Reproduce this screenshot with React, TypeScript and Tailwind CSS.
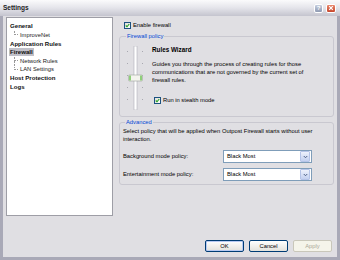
import type { ReactNode } from 'react'

type TreeItem = {
  label: string
  bold?: boolean
  child?: boolean
  last?: boolean
  selected?: boolean
}

const treeItems: TreeItem[] = [
  { label: 'General', bold: true },
  { label: 'ImproveNet', child: true, last: true },
  { label: 'Application Rules', bold: true },
  { label: 'Firewall', bold: true, selected: true },
  { label: 'Network Rules', child: true },
  { label: 'LAN Settings', child: true, last: true },
  { label: 'Host Protection', bold: true },
  { label: 'Logs', bold: true },
]

const font = { fontFamily: '"Liberation Sans", Arial, sans-serif' }

function CheckBox() {
  return (
    <span className="flex h-[7px] w-[7px] shrink-0 items-center justify-center border border-[#1c5180] bg-gradient-to-br from-[#dcdcd6] to-white">
      <svg width="5" height="5" viewBox="0 0 10 10">
        <path d="M1.5 5 L4 7.5 L8.5 2" fill="none" stroke="#21a121" strokeWidth="2.2" />
      </svg>
    </span>
  )
}

function Group({ title, className, children }: { title: string; className: string; children: ReactNode }) {
  return (
    <fieldset className={`rounded-[3px] border border-[#c9c8d0] ${className}`}>
      <legend className="ml-[2px] px-[1px] text-[5.8px] leading-[7px] text-[#0046d5]">{title}</legend>
      {children}
    </fieldset>
  )
}

function Select({ value }: { value: string }) {
  return (
    <div className="flex h-[13px] w-[89px] items-center justify-between border border-[#7f9db9] bg-white">
      <span className="pl-[3px] text-[5.8px] leading-[7px] text-black">{value}</span>
      <span className="mr-[1px] flex h-[11px] w-[10px] items-center justify-center rounded-[1px] border border-[#b5c4e8] bg-gradient-to-b from-[#eef2fc] to-[#c3d0f0]">
        <svg width="5" height="4" viewBox="0 0 10 8">
          <path d="M1.5 2 L5 5.5 L8.5 2" fill="none" stroke="#4d6185" strokeWidth="2" />
        </svg>
      </span>
    </div>
  )
}

function Button({ label, primary, disabled }: { label: string; primary?: boolean; disabled?: boolean }) {
  const look = disabled
    ? 'border-[#c9c7ba] bg-[#f5f4ea] text-[#aca899]'
    : primary
      ? 'border-[#003c74] bg-gradient-to-b from-white to-[#e3e2dc] text-black shadow-[inset_0_0_0_1px_#b8caf2]'
      : 'border-[#003c74] bg-gradient-to-b from-white to-[#e3e2dc] text-black'
  return (
    <div className={`flex h-[12px] w-[39px] items-center justify-center rounded-[2px] border text-[5.8px] leading-[7px] ${look}`}>
      {label}
    </div>
  )
}

function Slider() {
  const ticks = [52, 64, 76, 88, 100]
  return (
    <svg width="24" height="64" viewBox="0 0 24 64" className="shrink-0">
      {ticks.map((y) => (
        <g key={y}>
          <rect x="3" y={y - 47} width="1" height="1" fill="#a8a8b0" />
          <rect x="18" y={y - 47} width="1" height="1" fill="#a8a8b0" />
        </g>
      ))}
      <rect x="10" y="0" width="3" height="64" fill="#ffffff" stroke="#b0b0b8" strokeWidth="0.6" />
      <rect x="4.5" y="29" width="14" height="6" rx="1" fill="#f4f4ee" stroke="#9aa39a" strokeWidth="0.6" />
      <rect x="5" y="29.5" width="2" height="5" fill="#8fcf7a" />
      <rect x="16" y="29.5" width="2" height="5" fill="#8fcf7a" />
    </svg>
  )
}

export default function App() {
  return (
    <div className="flex h-[260px] w-[340px] flex-col overflow-hidden bg-[#e0dfe3]" style={font}>
      <div className="flex h-[16px] shrink-0 items-center justify-between bg-gradient-to-b from-[#fbfbfc] via-[#e4e4ea] to-[#c4c4ce] pl-[3px] pr-[4px]">
        <span className="text-[6.5px] font-bold leading-[8px] text-[#1c1c24]">Settings</span>
        <div className="flex gap-[3px]">
          <span className="flex h-[9px] w-[9px] items-center justify-center rounded-[2px] border border-white bg-gradient-to-b from-[#c6cede] to-[#8f9ab2] text-[6px] font-bold leading-[6px] text-white">?</span>
          <span className="flex h-[9px] w-[10px] items-center justify-center rounded-[2px] border border-white bg-gradient-to-b from-[#e8876d] to-[#c7462b]">
            <svg width="6" height="6" viewBox="0 0 10 10">
              <path d="M2 2 L8 8 M8 2 L2 8" stroke="white" strokeWidth="2" />
            </svg>
          </span>
        </div>
      </div>

      <div className="flex flex-1 flex-col border-x-[3px] border-b-[3px] border-[#a9a9b7]">
        <div className="flex items-start pt-[1px]">
          <div className="ml-[3px] h-[199px] w-[107px] shrink-0 border border-[#9e9ea6] bg-white pl-[2px] pt-[4px]">
            {treeItems.map((item) => (
              <div key={item.label} className="flex h-[8.7px] items-center">
                {item.child ? (
                  <>
                    <span className="ml-[5px] flex h-full w-[4px] flex-col">
                      <span className="h-1/2 border-b border-l border-dotted border-[#9a9a9a]" />
                      <span className={`h-1/2 ${item.last ? '' : 'border-l border-dotted border-[#9a9a9a]'}`} />
                    </span>
                    <span className="ml-[2px] text-[5.8px] leading-[7px] text-[#1a1a1a]">{item.label}</span>
                  </>
                ) : (
                  <span className={`px-[1px] text-[6.1px] font-bold leading-[8px] text-[#111] ${item.selected ? 'bg-[#c0c0c8]' : ''}`}>{item.label}</span>
                )}
              </div>
            ))}
          </div>

          <div className="flex flex-1 flex-col pl-[6px] pr-[3px]">
            <div className="ml-[5px] mt-[5px] flex h-[7px] items-center gap-[2px]">
              <CheckBox />
              <span className="text-[5.8px] leading-[7px] text-black">Enable firewall</span>
            </div>

            <Group title="Firewall policy" className="mt-[4px] h-[84px] pl-[4px]">
              <div className="mt-[6px] flex">
                <Slider />
                <div className="ml-[4px] flex flex-col text-[5.8px] leading-[8px] text-black">
                  <span className="text-[6.3px] font-bold">Rules Wizard</span>
                  <p className="mt-[6px]">
                    Guides you through the process of creating rules for those
                    <br />
                    communications that are not governed by the current set of
                    <br />
                    firewall rules.
                  </p>
                  <div className="ml-[2px] mt-[12px] flex items-center gap-[2px]">
                    <CheckBox />
                    <span>Run in stealth mode</span>
                  </div>
                </div>
              </div>
            </Group>

            <Group title="Advanced" className="mt-[2px] h-[66px] px-[3px]">
              <p className="mt-[2px] text-[5.8px] leading-[7.5px] text-black">
                Select policy that will be applied when Outpost Firewall starts without user
                <br />
                interaction.
              </p>
              <div className="mt-[7px] flex items-center">
                <span className="w-[100px] text-[5.8px] leading-[7px] text-black">Background mode policy:</span>
                <Select value="Black Most" />
              </div>
              <div className="mt-[5px] flex items-center">
                <span className="w-[100px] text-[5.8px] leading-[7px] text-black">Entertainment mode policy:</span>
                <Select value="Black Most" />
              </div>
            </Group>
          </div>
        </div>

        <div className="mt-auto flex justify-end gap-[5px] pb-[5px] pr-[5px]">
          <Button label="OK" primary />
          <Button label="Cancel" />
          <Button label="Apply" disabled />
        </div>
      </div>
    </div>
  )
}
